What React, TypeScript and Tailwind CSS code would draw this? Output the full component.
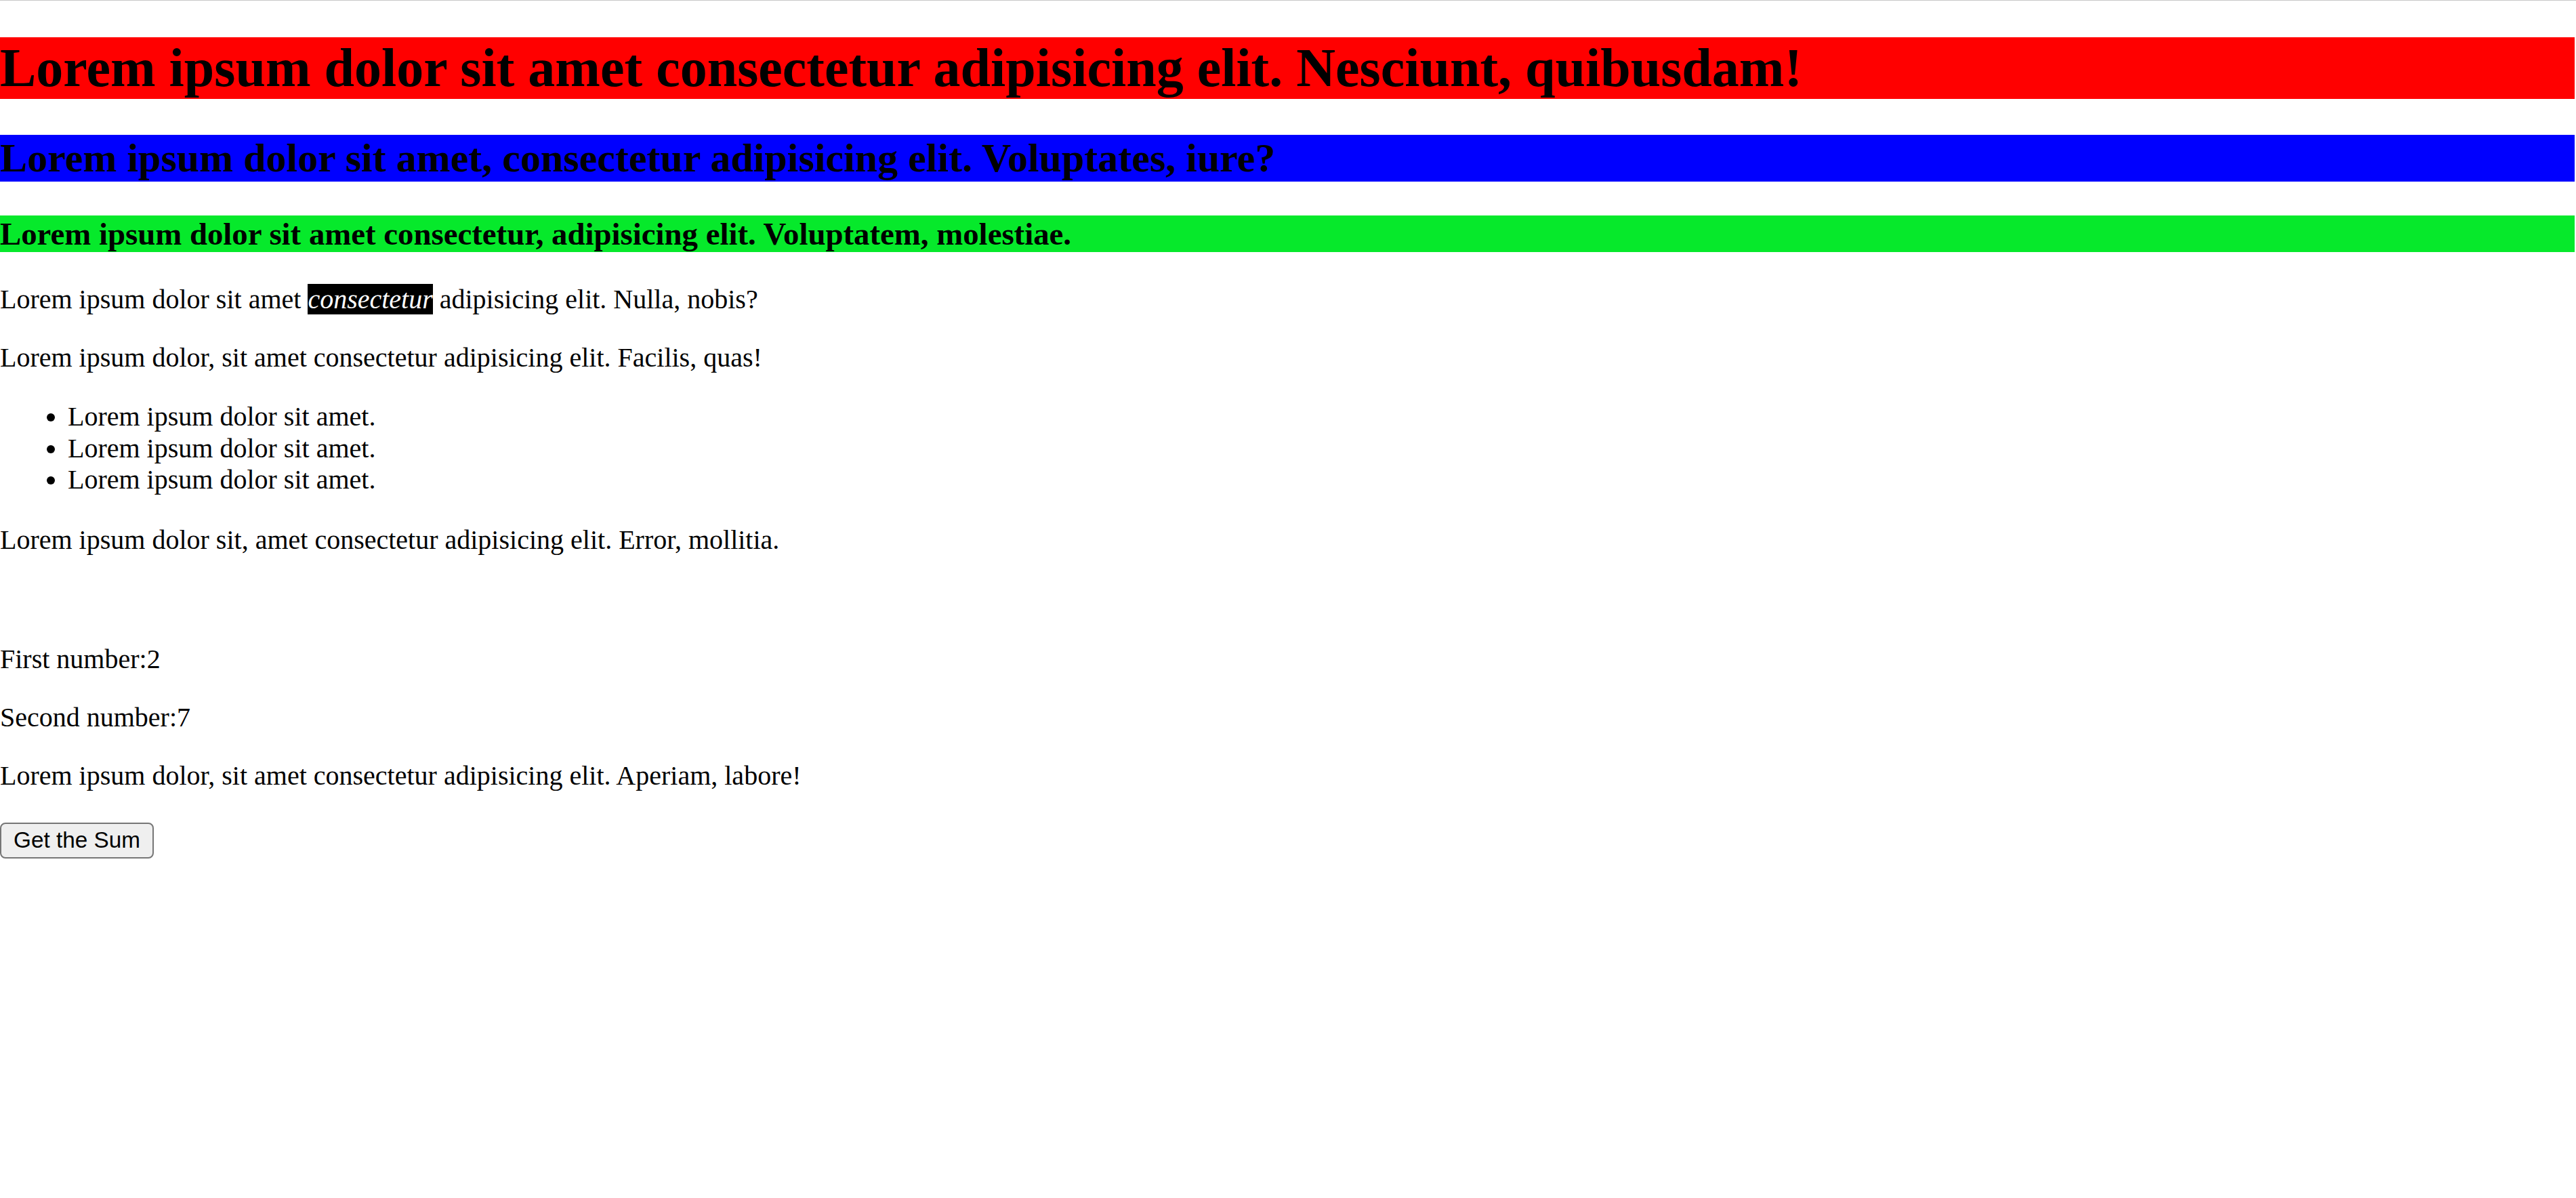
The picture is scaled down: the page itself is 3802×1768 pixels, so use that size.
const listItems = ["Lorem ipsum dolor sit amet.", "Lorem ipsum dolor sit amet.", "Lorem ipsum dolor sit amet."];

export default function App() {
  return (
    <div className="min-h-[1768px] w-full border-t border-[#c8c8c8] bg-white font-['Liberation_Serif','Times_New_Roman',serif] text-black">
      <div className="mr-[2px] flex flex-col">
        <h1 className="mt-[54px] h-[91px] bg-[#ff0000] text-[80px] leading-[91px] font-bold whitespace-nowrap">
          Lorem ipsum dolor sit amet consectetur adipisicing elit. Nesciunt, quibusdam!
        </h1>
        <h2 className="mt-[53px] h-[69px] bg-[#0000ff] text-[60px] leading-[69px] font-bold whitespace-nowrap">
          Lorem ipsum dolor sit amet, consectetur adipisicing elit. Voluptates, iure?
        </h2>
        <h3 className="mt-[50px] h-[54px] bg-[#06e92b] text-[46.8px] leading-[54px] font-bold whitespace-nowrap">
          Lorem ipsum dolor sit amet consectetur, adipisicing elit. Voluptatem, molestiae.
        </h3>

        <p className="mt-[47px] text-[40px] leading-[46px]">
          Lorem ipsum dolor sit amet <em className="bg-black text-white italic">consectetur</em> adipisicing elit. Nulla, nobis?
        </p>
        <p className="mt-[40px] text-[40px] leading-[46px]">
          Lorem ipsum dolor, sit amet consectetur adipisicing elit. Facilis, quas!
        </p>
        <ul className="mt-[41px] list-disc pl-[100px] text-[40px] leading-[46.5px]">
          {listItems.map((item, i) => (
            <li key={i}>{item}</li>
          ))}
        </ul>
        <p className="mt-[42px] text-[40px] leading-[46px]">
          Lorem ipsum dolor sit, amet consectetur adipisicing elit. Error, mollitia.
        </p>

        <p className="mt-[130px] text-[40px] leading-[46px]">First number:2</p>
        <p className="mt-[40px] text-[40px] leading-[46px]">Second number:7</p>
        <p className="mt-[40px] text-[40px] leading-[46px]">
          Lorem ipsum dolor, sit amet consectetur adipisicing elit. Aperiam, labore!
        </p>

        <div className="mt-[46px]">
          <button
            type="button"
            className="h-[53px] rounded-[8px] border-2 border-[#767676] bg-[#efefef] px-[18px] font-['Liberation_Sans',Arial,sans-serif] text-[33.33px] leading-[38px] text-black"
          >
            Get the Sum
          </button>
        </div>
      </div>
    </div>
  );
}
